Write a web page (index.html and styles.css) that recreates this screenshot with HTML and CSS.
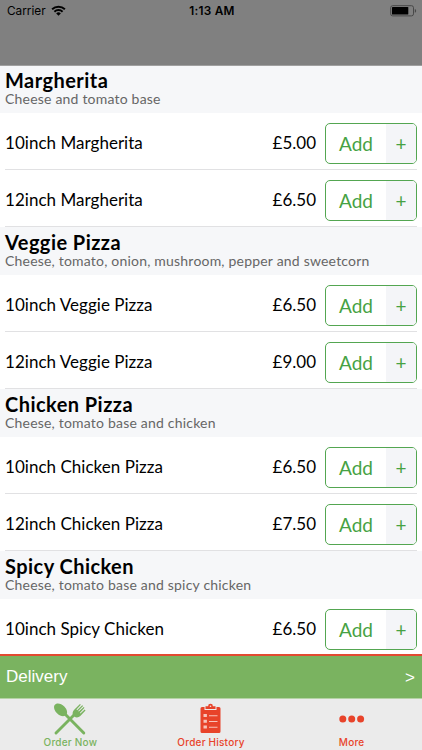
FILE: index.html
```html
<!DOCTYPE html>
<html lang="en">

<head>
    <meta charset="UTF-8">
    <meta name="viewport" content="width=device-width, initial-scale=1.0">
    <title>Order Now</title>
    <link rel="stylesheet" href="styles.css">
</head>

<body>
    <div class="status-bar">
        <div class="carrier">
            <span>Carrier</span>
            <svg class="wifi" viewBox="0 0 15 11">
                <path d="M1.1 4.3a9.2 9.2 0 0 1 12.8 0M3.4 6.7a5.9 5.9 0 0 1 8.2 0" fill="none" stroke="#000" stroke-width="1.9" />
                <path d="M5.2 8.4a3.3 3.3 0 0 1 4.6 0L7.5 10.7z" />
            </svg>
        </div>
        <div class="clock">1:13 AM</div>
        <div class="battery">
            <svg viewBox="0 0 27 12">
                <rect x=".7" y=".7" width="22.8" height="10.2" rx="2" fill="none" stroke="#484848" />
                <rect x="2" y="2" width="16.3" height="7.6" rx=".6" />
                <path d="M24.8 3.9c1.8.4 1.8 3.4 0 3.8z" fill="#484848" />
            </svg>
        </div>
    </div>

    <div class="menu">
        <div class="section-header">
            <h2>Margherita</h2>
            <p>Cheese and tomato base</p>
        </div>
        <div class="item">
            <span class="name">10inch Margherita</span>
            <span class="price">£5.00</span>
            <button class="add"><span class="label">Add</span><span class="plus">+</span></button>
        </div>
        <div class="item">
            <span class="name">12inch Margherita</span>
            <span class="price">£6.50</span>
            <button class="add"><span class="label">Add</span><span class="plus">+</span></button>
        </div>

        <div class="section-header">
            <h2>Veggie Pizza</h2>
            <p>Cheese, tomato, onion, mushroom, pepper and sweetcorn</p>
        </div>
        <div class="item">
            <span class="name">10inch Veggie Pizza</span>
            <span class="price">£6.50</span>
            <button class="add"><span class="label">Add</span><span class="plus">+</span></button>
        </div>
        <div class="item">
            <span class="name">12inch Veggie Pizza</span>
            <span class="price">£9.00</span>
            <button class="add"><span class="label">Add</span><span class="plus">+</span></button>
        </div>

        <div class="section-header">
            <h2>Chicken Pizza</h2>
            <p>Cheese, tomato base and chicken</p>
        </div>
        <div class="item">
            <span class="name">10inch Chicken Pizza</span>
            <span class="price">£6.50</span>
            <button class="add"><span class="label">Add</span><span class="plus">+</span></button>
        </div>
        <div class="item">
            <span class="name">12inch Chicken Pizza</span>
            <span class="price">£7.50</span>
            <button class="add"><span class="label">Add</span><span class="plus">+</span></button>
        </div>

        <div class="section-header">
            <h2>Spicy Chicken</h2>
            <p>Cheese, tomato base and spicy chicken</p>
        </div>
        <div class="item">
            <span class="name">10inch Spicy Chicken</span>
            <span class="price">£6.50</span>
            <button class="add"><span class="label">Add</span><span class="plus">+</span></button>
        </div>
    </div>

    <div class="delivery">
        <span>Delivery</span>
        <span class="arrow">&gt;</span>
    </div>

    <div class="tabs">
        <div class="tab active">
            <svg viewBox="0 0 34 34">
                <!-- fork -->
                <path d="M3 31L22 12" stroke="currentColor" stroke-width="2.9" stroke-linecap="round" />
                <path d="M20 13.5c-.8-2.2-.4-4.2 1.2-5.8L27 2l.8.8-4.3 4.8.6.6L29.2 3.2l.9.9-4.9 4.9.6.6 4.9-4.6.8.8-4.7 5.1.6.5 4.300-3.900.8.900-5.200 5.600c-1.600 1.600-4 2-6 .6z" fill="currentColor" />
                <!-- spoon -->
                <path d="M30.800 31L12 12" stroke="currentColor" stroke-width="2.900" stroke-linecap="round" />
                <path d="M1.500 3.200C3.300.6 8 1.300 11.300 4.500c3 3 3.600 6.700 1.800 8.600-2 2-6 1.300-8.800-1.500C1.500 8.900.3 5.300 1.500 3.200z" fill="currentColor" />
            </svg>
            <span>Order Now</span>
        </div>
        <div class="tab">
            <svg viewBox="0 0 34 34">
                <path d="M8 5h2.500v3h12V5H25a1.500 1.500 0 0 1 1.500 1.500v23A1.500 1.500 0 0 1 25 31H8a1.500 1.500 0 0 1-1.500-1.500v-23A1.500 1.500 0 0 1 8 5z" fill="currentColor" />
                <path d="M11.500 7V4.200h2.600a2.400 2.400 0 0 1 4.800 0h2.600V7z" fill="currentColor" />
                <circle cx="16.500" cy="4.200" r=".8" fill="#ebebeb" />
                <path d="M9.500 12h3.400v3H9.500zM9.500 17.700h3.400v3H9.500zM9.500 23.400h3.400v3H9.500z" fill="#f7c4ba" />
                <path d="M15 13.800h8.500M15 19.500h8.500M15 25.200h8.500" stroke="#f7c4ba" stroke-width="1.100" />
            </svg>
            <span>Order History</span>
        </div>
        <div class="tab">
            <svg viewBox="0 0 34 34">
                <g fill="currentColor">
                    <circle cx="7.800" cy="17" r="3.500" />
                    <circle cx="16.700" cy="17" r="3.500" />
                    <circle cx="25.600" cy="17" r="3.500" />
                </g>
            </svg>
            <span>More</span>
        </div>
    </div>
</body>

</html>
```

FILE: styles.css
```css
body {
    margin: 0;
    height: 750px;
    display: flex;
    flex-direction: column;
    overflow: hidden;
    font-family: Lato, sans-serif;
    background-color: white;
    color: #000;
}

.status-bar {
    flex: none;
    height: 66px;
    padding: 0 5px 0 7px;
    display: grid;
    grid-template-columns: 1fr auto 1fr;
    align-items: start;
    box-sizing: border-box;
    border-bottom: 1px solid #a0a0a0;
    background-color: #808080;
    font-family: Inter, sans-serif;
    font-size: 11.8px;
    line-height: 22px;
}

.carrier {
    display: flex;
    gap: 5px;
}

.wifi {
    width: 15px;
    height: 11px;
    margin-top: 5px;
}

.clock {
    font-weight: 600;
    letter-spacing: 0.25px;
}

.battery {
    justify-self: end;
    height: 12px;
    padding-top: 5px;
    line-height: 0;
}

.battery svg {
    width: 27px;
    height: 12px;
}

.menu {
    flex: 1;
    min-height: 0;
    overflow: hidden;
}

.section-header {
    height: 48px;
    padding: 3px 5px 0;
    box-sizing: border-box;
    background-color: #f6f7f9;
}

.section-header:first-child {
    height: 47px;
    padding-top: 2px;
}

h2 {
    margin: 0;
    font-size: 20px;
    line-height: 24px;
    font-weight: bold;
    letter-spacing: 0.45px;
}

.section-header p {
    margin: 0;
    font-size: 14px;
    line-height: 14px;
    letter-spacing: 0.2px;
    color: #666;
}

.item {
    height: 57px;
    margin: 0 5px;
    padding-top: 4px;
    box-sizing: border-box;
    display: flex;
    align-items: center;
    border-bottom: 1px solid #e1e1e3;
    font-size: 17px;
}

.name {
    flex: 1;
    padding-bottom: 2px;
    letter-spacing: 0.03px;
}

.price {
    padding-bottom: 2px;
    margin-right: 9px;
}

.add {
    width: 92px;
    height: 41px;
    padding: 0;
    display: flex;
    overflow: hidden;
    border: 1px solid #53a651;
    border-radius: 5px;
    background-color: white;
    color: #46a243;
    font-family: inherit;
    font-size: 19px;
    line-height: 39px;
}

.label {
    width: 60px;
}

.plus {
    flex: 1;
    background-color: #f4f5f8;
}

.delivery {
    flex: none;
    height: 45px;
    padding: 0 7px 0 6px;
    box-sizing: border-box;
    display: flex;
    justify-content: space-between;
    align-items: center;
    border-top: 2px solid #e14a31;
    border-bottom: 1px solid #b5d3a5;
    background-color: #7ab360;
    color: white;
    font-family: "Liberation Sans", Arial, sans-serif;
    font-size: 17px;
}

.arrow {
    padding-top: 2px;
}

.tabs {
    flex: none;
    height: 51px;
    display: grid;
    grid-template-columns: repeat(3, 1fr);
    background-color: #ebebeb;
}

.tab {
    display: flex;
    flex-direction: column;
    align-items: center;
    padding-top: 3px;
    color: #e8432a;
    font-family: Inter, sans-serif;
    font-size: 10px;
    font-weight: 500;
    line-height: 12px;
    letter-spacing: 0.22px;
}

.tab svg {
    width: 34px;
    height: 34px;
}

.active {
    color: #7ab360;
}
```
